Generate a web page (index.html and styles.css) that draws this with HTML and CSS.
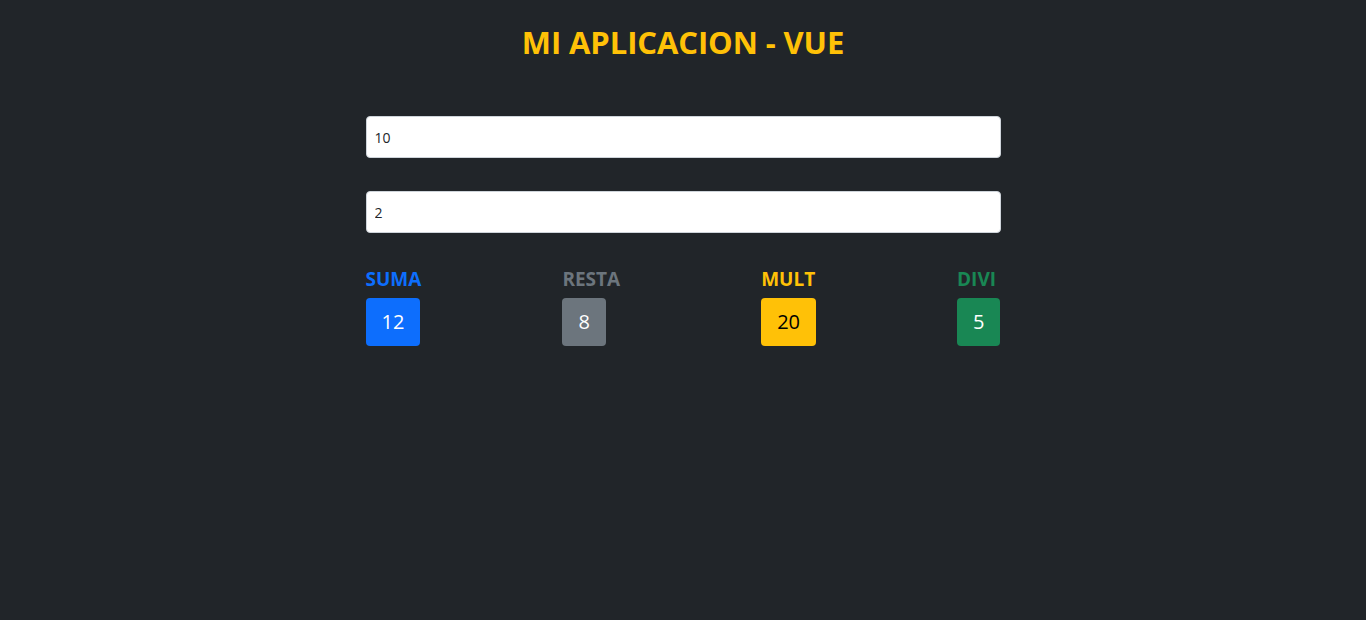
FILE: index.html
```html
<!DOCTYPE html>
<html lang="es">
<head>
<meta charset="utf-8">
<title>MI APLICACION - VUE</title>
<link rel="stylesheet" href="styles.css">
</head>
<body>
<div class="app">
  <h1 class="title">MI APLICACION - VUE</h1>
  <div class="panel">
    <input class="field" type="text" value="10">
    <input class="field" type="text" value="2">
    <div class="results">
      <div class="result">
        <div class="label label-blue">SUMA</div>
        <div class="badge badge-blue">12</div>
      </div>
      <div class="result">
        <div class="label label-gray">RESTA</div>
        <div class="badge badge-gray">8</div>
      </div>
      <div class="result">
        <div class="label label-yellow">MULT</div>
        <div class="badge badge-yellow">20</div>
      </div>
      <div class="result">
        <div class="label label-green">DIVI</div>
        <div class="badge badge-green">5</div>
      </div>
    </div>
  </div>
</div>
</body>
</html>
```
FILE: styles.css
```css
html, body {
  margin: 0;
  padding: 0;
  background: #212529;
  height: 100%;
}
body {
  font-family: "Open Sans", "Noto Sans", sans-serif;
  color: #dee2e6;
}
.app {
  padding-top: 22px;
}
.title {
  margin: 0;
  text-align: center;
  color: #ffc107;
  font-size: 31px;
  font-weight: 700;
  line-height: 40px;
  letter-spacing: -0.1px;
}
.panel {
  width: 635px;
  margin: 54px auto 0;
  display: flex;
  flex-direction: column;
}
.field {
  box-sizing: border-box;
  height: 42px;
  margin: 0 0 33px;
  padding: 0 8px;
  border: 1px solid #ced4da;
  border-radius: 4px;
  background: #fff;
  color: #212529;
  font-family: "Open Sans", "Noto Sans", sans-serif;
  font-size: 14px;
  outline: none;
}
.results {
  margin-top: 1px;
  display: flex;
  justify-content: space-between;
}
.result {
  display: flex;
  flex-direction: column;
  align-items: flex-start;
}
.label {
  font-size: 19px;
  font-weight: 700;
  line-height: 24px;
  margin-bottom: 7px;
  letter-spacing: 0;
}
.label-blue { color: #0d6efd; }
.label-gray { color: #6c757d; }
.label-yellow { color: #ffc107; }
.label-green { color: #198754; }
.badge {
  box-sizing: border-box;
  height: 48px;
  padding: 0 16px;
  border-radius: 4px;
  font-size: 20px;
  line-height: 48px;
  color: #fff;
}
.badge-blue { background: #0d6efd; }
.badge-gray { background: #6c757d; }
.badge-yellow { background: #ffc107; color: #000; }
.badge-green { background: #198754; }
```
